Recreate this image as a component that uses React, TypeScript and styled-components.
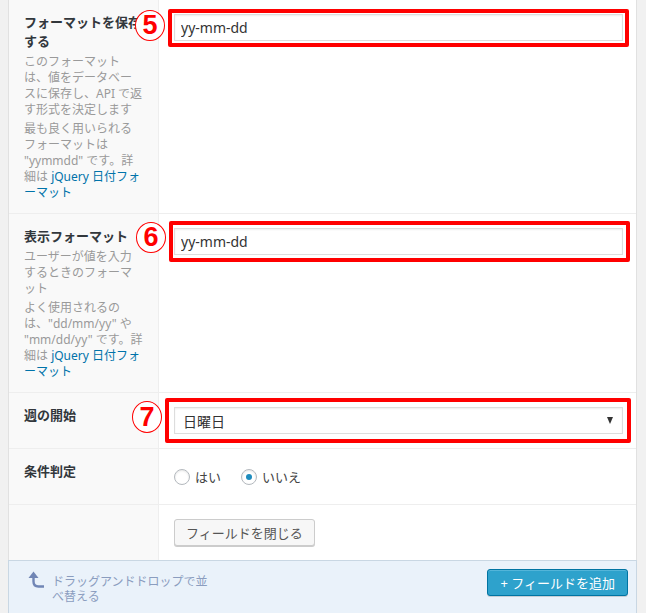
import React from "react";
import styled, { createGlobalStyle } from "styled-components";

const Global = createGlobalStyle`
  *, *::before, *::after { box-sizing: border-box; }
  html, body { margin: 0; padding: 0; background: #f1f1f1; }
  body { font-family: "Noto Sans", "Noto Sans CJK JP", sans-serif; color: #444; }
`;

const Page = styled.div`
  padding: 0 9px 0 8px;
  height: 613px;
  overflow: hidden;
`;

const Panel = styled.div`
  background: #fff;
  border-left: 1px solid #e1e1e1;
  border-right: 1px solid #e1e1e1;
`;

const Row = styled.div`
  position: relative;
  display: grid;
  grid-template-columns: 150px 1fr;
  & + & { border-top: 1px solid #eeeeee; }
`;

const LabelCell = styled.div`
  background: #f9f9f9;
  border-right: 1px solid #eeeeee;
  padding: 13px 15px 12px 15px;
`;

const Label = styled.div`
  font-size: 13px;
  line-height: 19px;
  font-weight: 700;
  color: #32373c;
`;

const Desc = styled.p`
  margin: 3px 0 0;
  font-size: 12px;
  line-height: 16px;
  color: #9a9a9a;
  white-space: nowrap;
`;

const Link = styled.a`
  color: #0073aa;
  text-decoration: none;
`;

const InputCell = styled.div`
  padding: 14px 13px 14px 15px;
`;

const Highlight = styled.div`
  position: relative;
`;

const Frame = styled.div<{ $t: number; $r: number; $b: number; $l: number }>`
  position: absolute;
  top: ${(p) => -p.$t}px;
  right: ${(p) => -p.$r}px;
  bottom: ${(p) => -p.$b}px;
  left: ${(p) => -p.$l}px;
  border: 4px solid #ff0000;
  border-radius: 2px;
  pointer-events: none;
`;

const TextInput = styled.input`
  display: block;
  width: 100%;
  height: 27px;
  margin: 0;
  padding: 0 6px;
  border: 1px solid #dddddd;
  box-shadow: inset 0 1px 2px rgba(0, 0, 0, 0.07);
  background: #fff;
  font-family: "Noto Sans", "Noto Sans CJK JP", sans-serif;
  font-size: 14px;
  color: #333;
  outline: none;
`;

const SelectBox = styled.div`
  display: flex;
  align-items: center;
  justify-content: space-between;
  height: 27px;
  padding: 0 5px 0 8px;
  border: 1px solid #dddddd;
  box-shadow: inset 0 1px 2px rgba(0, 0, 0, 0.07);
  background: #fff;
  font-size: 14px;
  color: #333;
`;

const Caret = styled.span`
  width: 0;
  height: 0;
  border-left: 3.5px solid transparent;
  border-right: 3.5px solid transparent;
  border-top: 7px solid #333;
  margin-right: 4px;
`;

const RadioList = styled.div`
  display: flex;
  align-items: center;
  height: 27px;
`;

const RadioItem = styled.label`
  display: flex;
  align-items: center;
  margin-right: 20px;
  font-size: 13px;
  color: #444;
`;

const RadioDot = styled.span<{ $checked?: boolean }>`
  position: relative;
  width: 16px;
  height: 16px;
  margin-right: 5px;
  border-radius: 50%;
  border: 1px solid #b4b9be;
  background: #fff;
  box-shadow: inset 0 1px 2px rgba(0, 0, 0, 0.1);
  &::after {
    content: "";
    display: ${(p) => (p.$checked ? "block" : "none")};
    position: absolute;
    left: 4px;
    top: 4px;
    width: 6px;
    height: 6px;
    border-radius: 50%;
    background: #1e8cbe;
  }
`;

const Button = styled.button`
  height: 27px;
  padding: 0 11px;
  border: 1px solid #cccccc;
  border-radius: 3px;
  background: #f7f7f7;
  box-shadow: 0 1px 0 #cccccc;
  font-family: "Noto Sans", "Noto Sans CJK JP", sans-serif;
  font-size: 13px;
  color: #555;
  cursor: pointer;
`;

const Footer = styled.div`
  display: flex;
  justify-content: space-between;
  align-items: flex-start;
  padding: 8px 8px 9px 19px;
  background: #eaf2fa;
  border: 1px solid #c9d7e3;
`;

const Hint = styled.div`
  display: flex;
  align-items: flex-start;
`;

const HintArrow = styled.svg`
  margin-top: 2px;
  margin-right: 8px;
  flex: none;
`;

const HintText = styled.div`
  margin-top: 5px;
  font-size: 12px;
  line-height: 15px;
  color: #8b9dbf;
  white-space: nowrap;
`;

const PrimaryButton = styled.button`
  height: 27px;
  padding: 0 12px;
  border: 1px solid #0074a2;
  border-radius: 3px;
  background: #2ea2cc;
  box-shadow: inset 0 1px 0 rgba(120, 200, 230, 0.5), 0 1px 0 rgba(0, 0, 0, 0.15);
  font-family: "Noto Sans", "Noto Sans CJK JP", sans-serif;
  font-size: 13px;
  color: #fff;
  cursor: pointer;
`;

const Badge = styled.span<{ $x: number; $y: number; $h?: number }>`
  position: absolute;
  left: ${(p) => p.$x}px;
  top: ${(p) => p.$y}px;
  width: 30px;
  height: ${(p) => p.$h ?? 31}px;
  display: flex;
  align-items: center;
  justify-content: center;
  border: 1.5px solid #ff0000;
  border-radius: 50%;
  background: #fff;
  color: #ff0000;
  font-family: "Liberation Sans", Arial, sans-serif;
  font-weight: 700;
  font-size: 27px;
  line-height: 1;
  z-index: 2;
`;

export default function App() {
  return (
    <Page>
      <Global />
      <Panel>
        <Row>
          <LabelCell>
            <Label>フォーマットを保存する</Label>
            <Desc>
              このフォーマット<br />は、値をデータベー<br />スに保存し、API で返<br />す形式を決定します
            </Desc>
            <Desc>
              最も良く用いられる<br />フォーマットは<br />"yymmdd" です。詳<br />細は{" "}
              <Link href="#">jQuery 日付フォ<br />ーマット</Link>
            </Desc>
          </LabelCell>
          <InputCell>
            <Highlight>
              <TextInput defaultValue="yy-mm-dd" />
              <Frame $t={5} $r={6} $b={6} $l={6} />
            </Highlight>
          </InputCell>
          <Badge $x={126} $y={10}>5</Badge>
        </Row>

        <Row>
          <LabelCell>
            <Label>表示フォーマット</Label>
            <Desc>
              ユーザーが値を入力<br />するときのフォーマ<br />ット
            </Desc>
            <Desc>
              よく使用されるの<br />は、"dd/mm/yy" や<br />"mm/dd/yy" です。詳<br />細は{" "}
              <Link href="#">jQuery 日付フォ<br />ーマット</Link>
            </Desc>
          </LabelCell>
          <InputCell>
            <Highlight>
              <TextInput defaultValue="yy-mm-dd" />
              <Frame $t={7} $r={7} $b={7} $l={5} />
            </Highlight>
          </InputCell>
          <Badge $x={127} $y={8}>6</Badge>
        </Row>

        <Row>
          <LabelCell>
            <Label>週の開始</Label>
          </LabelCell>
          <InputCell>
            <Highlight>
              <SelectBox>
                <span>日曜日</span>
                <Caret />
              </SelectBox>
              <Frame $t={9} $r={8} $b={9} $l={9} />
            </Highlight>
          </InputCell>
          <Badge $x={123} $y={8} $h={32}>7</Badge>
        </Row>

        <Row>
          <LabelCell>
            <Label>条件判定</Label>
          </LabelCell>
          <InputCell>
            <RadioList>
              <RadioItem>
                <RadioDot />
                はい
              </RadioItem>
              <RadioItem>
                <RadioDot $checked />
                いいえ
              </RadioItem>
            </RadioList>
          </InputCell>
        </Row>

        <Row>
          <LabelCell />
          <InputCell>
            <Button>フィールドを閉じる</Button>
          </InputCell>
        </Row>
      </Panel>

      <Footer>
        <Hint>
          <HintArrow width="16" height="17" viewBox="0 0 16 17">
            <path d="M0.5 7 L5.5 0.5 L10.5 7 Z" fill="#7186b5" />
            <path d="M5.5 6 V10.5 Q5.5 15.5 10.5 15.5 H16" fill="none" stroke="#7186b5" strokeWidth="2.4" />
          </HintArrow>
          <HintText>
            ドラッグアンドドロップで並<br />べ替える
          </HintText>
        </Hint>
        <PrimaryButton>+ フィールドを追加</PrimaryButton>
      </Footer>
    </Page>
  );
}
